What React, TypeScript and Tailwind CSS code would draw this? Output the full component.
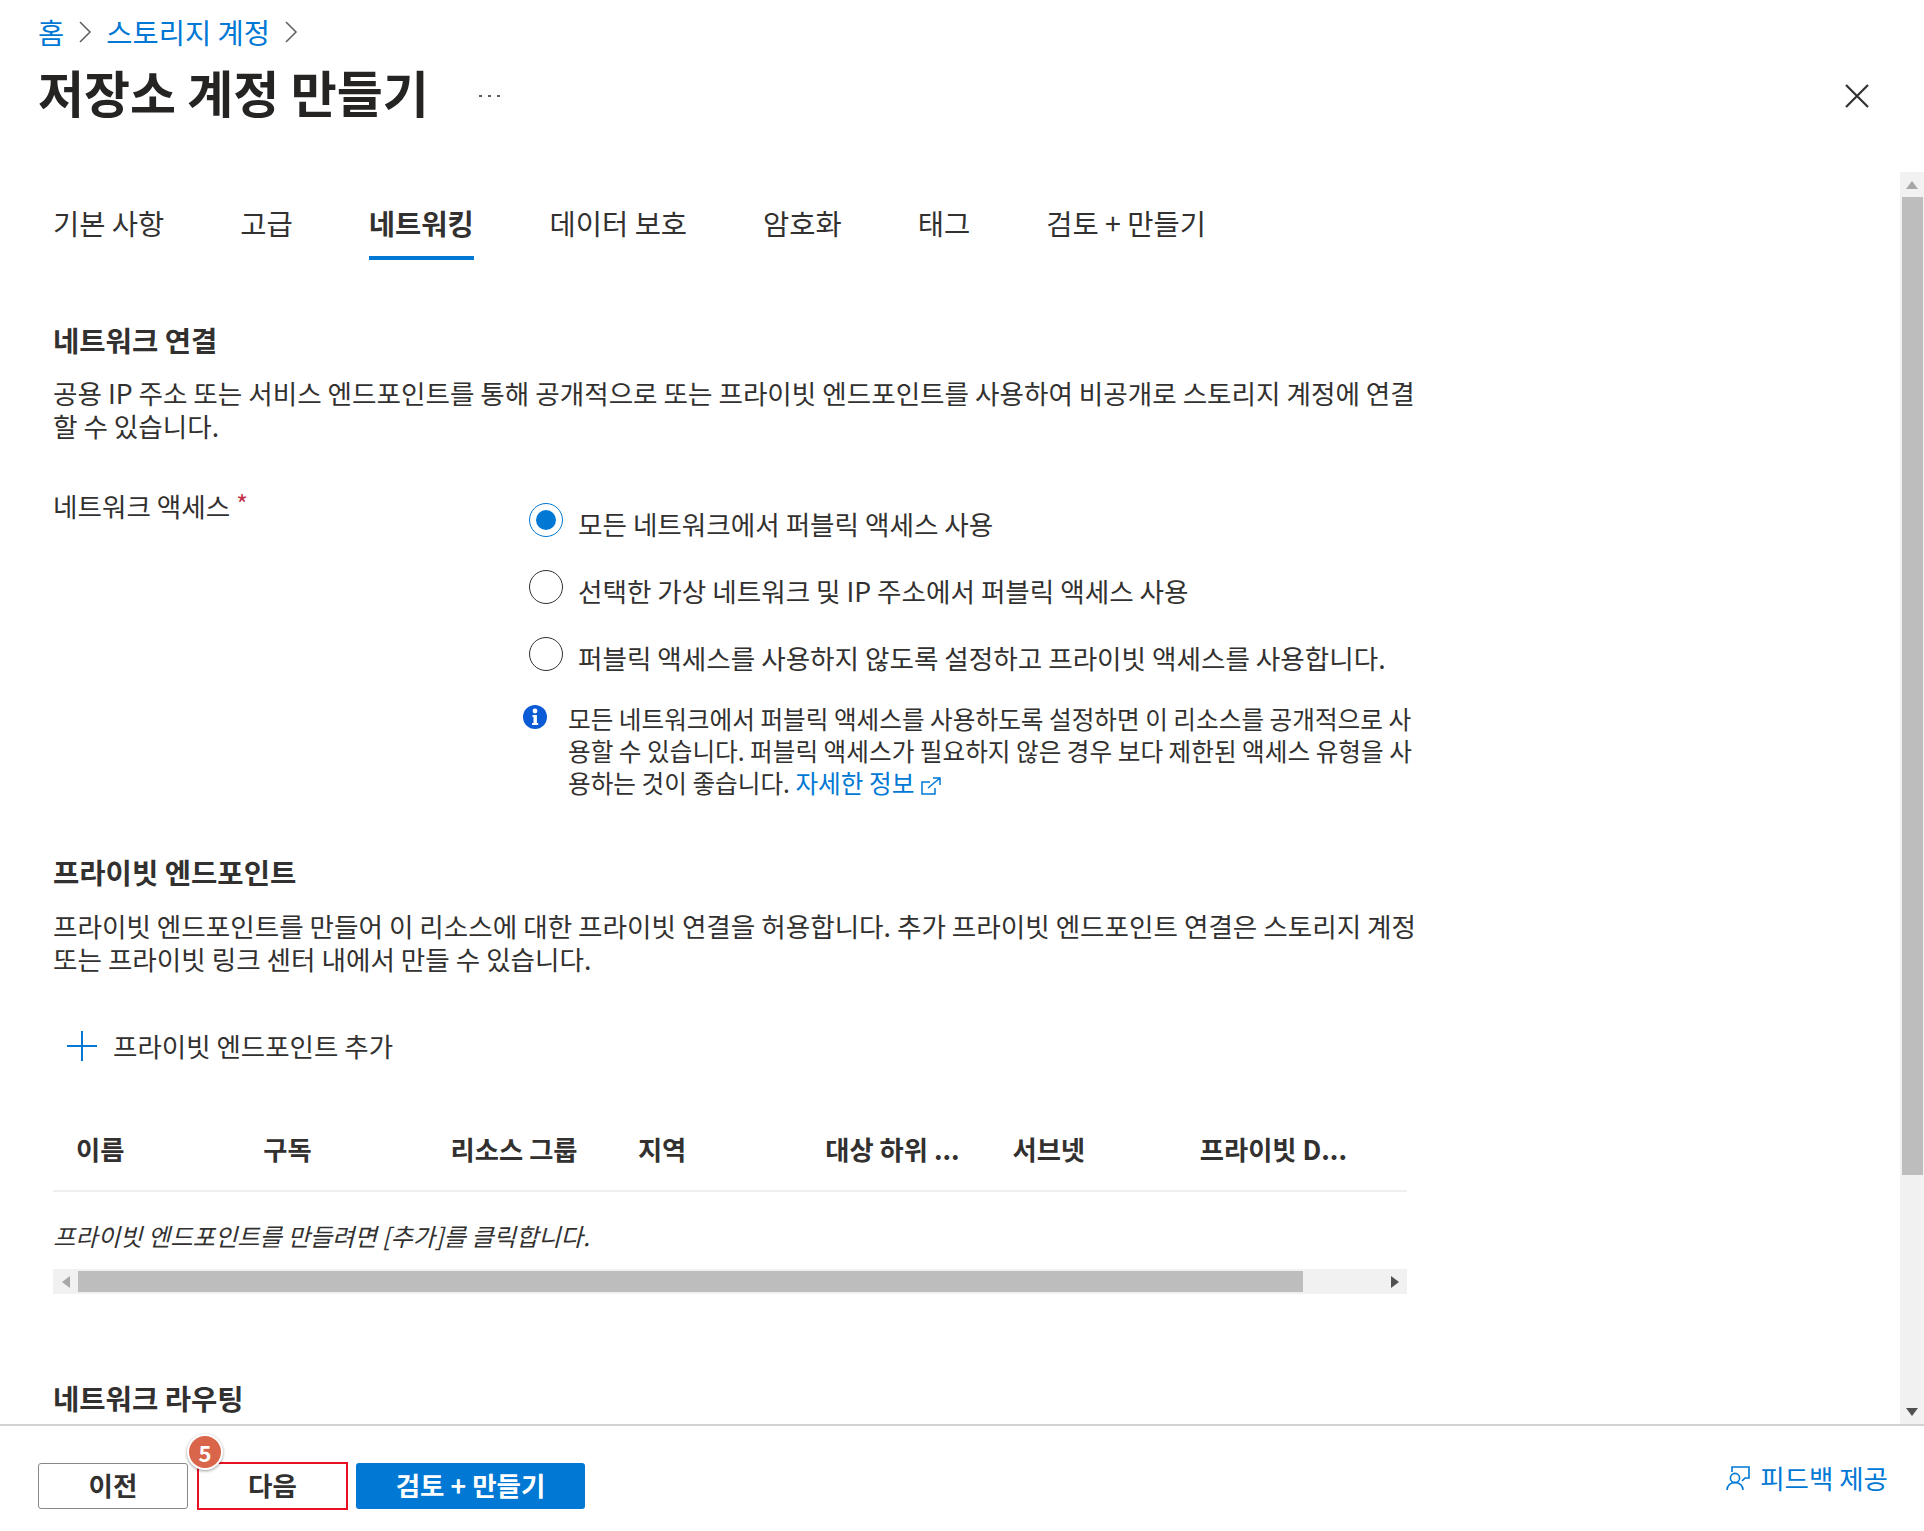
import React from "react";

const font = { fontFamily: '"Noto Sans CJK KR", "Liberation Sans", sans-serif' };

function Radio({ checked }: { checked?: boolean }) {
  return (
    <span className={`flex h-[34px] w-[34px] shrink-0 items-center justify-center rounded-full border-[1.5px] ${checked ? "border-[#0078d4]" : "border-[#323130]"}`}>
      {checked && <span className="h-[20px] w-[20px] rounded-full bg-[#0078d4]" />}
    </span>
  );
}

function RadioRow({ label, checked }: { label: string; checked?: boolean }) {
  return (
    <div className="flex h-[34px] items-start gap-[15px]">
      <Radio checked={checked} />
      <span className="mt-[4px] text-[26.6px] leading-[34px] whitespace-nowrap">{label}</span>
    </div>
  );
}

function Chevron() {
  return (
    <svg width="14" height="22" viewBox="0 0 14 22" className="shrink-0" fill="none" stroke="#605e5c" strokeWidth="1.5">
      <path d="M2 1l10 10L2 21" />
    </svg>
  );
}

function Triangle({ dir, color }: { dir: "up" | "down" | "left" | "right"; color: string }) {
  const d = { up: "M0 8L6 0l6 8z", down: "M0 0l6 8 6-8z", left: "M8 0v12L0 6z", right: "M0 0v12l8-6z" }[dir];
  const vertical = dir === "up" || dir === "down";
  return (
    <svg width={vertical ? 12 : 8} height={vertical ? 8 : 12} viewBox={vertical ? "0 0 12 8" : "0 0 8 12"}>
      <path d={d} fill={color} />
    </svg>
  );
}

const tabs = ["기본 사항", "고급", "네트워킹", "데이터 보호", "암호화", "태그", "검토 + 만들기"];
const cols = ["이름", "구독", "리소스 그룹", "지역", "대상 하위 ...", "서브넷", "프라이빗 D..."];

export default function App() {
  return (
    <div style={font} className="flex h-[1531px] w-[1924px] flex-col overflow-hidden bg-white text-[#323130]">
      <header className="relative h-[172px] shrink-0 pl-[38px] pr-[55px]">
        <nav className="flex items-center gap-[14px] pt-[13px] text-[28.5px] leading-[38px] text-[#0078d4]">
          <span>홈</span>
          <Chevron />
          <span>스토리지 계정</span>
          <Chevron />
        </nav>
        <div className="mt-[9px] flex items-center justify-between">
          <div className="flex items-center">
            <h1 className="text-[50px] font-bold leading-[62px] text-[#252423]">저장소 계정 만들기</h1>
            <span className="ml-[50px] mt-[10px] flex gap-[6px]">
              <span className="h-[2px] w-[3px] bg-[#605e5c]" />
              <span className="h-[2px] w-[3px] bg-[#605e5c]" />
              <span className="h-[2px] w-[3px] bg-[#605e5c]" />
            </span>
          </div>
          <svg width="24" height="24" viewBox="0 0 24 24" stroke="#323130" strokeWidth="2.2" fill="none" className="mt-[10px]">
            <path d="M1 1l22 22M23 1L1 23" />
          </svg>
        </div>
      </header>

      <main className="flex min-h-0 flex-1">
        <div className="min-w-0 flex-1 overflow-hidden pl-[53px]">
          <div className="flex gap-[76px] pt-[28px]">
            {tabs.map((t) => (
              <div key={t} className={`flex h-[60px] flex-col justify-between whitespace-nowrap text-[28.5px] leading-[46px] ${t === "네트워킹" ? "border-b-[4px] border-[#0078d4] font-bold" : ""}`}>
                {t}
              </div>
            ))}
          </div>

          <h2 className="mt-[63px] text-[28.6px] font-bold leading-[34px]">네트워크 연결</h2>
          <p className="mt-[19px] w-[1372px] text-[26.6px] leading-[33px]">
            공용 IP 주소 또는 서비스 엔드포인트를 통해 공개적으로 또는 프라이빗 엔드포인트를 사용하여 비공개로 스토리지 계정에 연결할 수 있습니다.
          </p>

          <div className="mt-[47px] flex">
            <div className="w-[476px] shrink-0 text-[26.6px] leading-[34px]">
              네트워크 액세스 <span className="align-[3px] text-[25px] leading-none text-[#c4314b]">*</span>
            </div>
            <div className="mt-[14px] flex flex-col gap-[33px]">
              <RadioRow checked label="모든 네트워크에서 퍼블릭 액세스 사용" />
              <RadioRow label="선택한 가상 네트워크 및 IP 주소에서 퍼블릭 액세스 사용" />
              <RadioRow label="퍼블릭 액세스를 사용하지 않도록 설정하고 프라이빗 액세스를 사용합니다." />
              <div className="-ml-[6px] mt-[1px] flex gap-[21px]">
                <svg width="24" height="24" viewBox="0 0 24 24" className="shrink-0">
                  <circle cx="12" cy="12" r="12" fill="#0b5ad6" />
                  <circle cx="12" cy="6" r="2.4" fill="#fff" />
                  <path d="M9.5 10h4.4v8h1.3v2H9v-2h1.5v-6H9.5z" fill="#fff" />
                </svg>
                <p className="-mt-[3px] w-[846px] text-[24.65px] leading-[32px]">
                  모든 네트워크에서 퍼블릭 액세스를 사용하도록 설정하면 이 리소스를 공개적으로 사용할 수 있습니다. 퍼블릭 액세스가 필요하지 않은 경우 보다 제한된 액세스 유형을 사용하는 것이 좋습니다.{" "}
                  <span className="text-[#0078d4]">자세한 정보</span>
                  <svg width="20" height="18" viewBox="0 0 20 18" className="ml-[7px] inline-block align-[-2px]" fill="none" stroke="#0078d4" strokeWidth="1.5">
                    <path d="M9 5H1v12h13v-6M7 11L19 1M12 1h7v7" />
                  </svg>
                </p>
              </div>
            </div>
          </div>

          <h2 className="mt-[57px] text-[28.6px] font-bold leading-[34px]">프라이빗 엔드포인트</h2>
          <p className="mt-[20px] w-[1372px] text-[26.6px] leading-[33px]">
            프라이빗 엔드포인트를 만들어 이 리소스에 대한 프라이빗 연결을 허용합니다. 추가 프라이빗 엔드포인트 연결은 스토리지 계정 또는 프라이빗 링크 센터 내에서 만들 수 있습니다.
          </p>

          <div className="mt-[54px] flex items-center gap-[16px] pl-[14px]">
            <svg width="30" height="30" viewBox="0 0 30 30" stroke="#0078d4" strokeWidth="2" fill="none">
              <path d="M15 0v30M0 15h30" />
            </svg>
            <span className="text-[26.5px] leading-[34px]">프라이빗 엔드포인트 추가</span>
          </div>

          <div className="w-[1354px]">
            <div className="mt-[69px] flex h-[60px] items-start border-b-2 border-[#efefef] pl-[23px]">
              {cols.map((c) => (
                <div key={c} className="w-[187.3px] shrink-0 whitespace-nowrap text-[26.3px] font-bold leading-[34px]">
                  {c}
                </div>
              ))}
            </div>
            <p className="mt-[27px] text-[24.3px] italic leading-[34px]">프라이빗 엔드포인트를 만들려면 [추가]를 클릭합니다.</p>
            <div className="mt-[16px] flex h-[25px] items-center bg-[#f1f1f1]">
              <span className="flex w-[25px] shrink-0 justify-center"><Triangle dir="left" color="#a6a6a6" /></span>
              <span className="h-[21px] w-[1225px] shrink-0 bg-[#bdbdbd]" />
              <span className="flex flex-1 justify-center pl-[80px]"><Triangle dir="right" color="#505050" /></span>
            </div>
          </div>

          <h2 className="mt-[87px] text-[28.6px] font-bold leading-[34px]">네트워크 라우팅</h2>
        </div>

        <div className="flex w-[24px] shrink-0 flex-col bg-[#f1f1f1]">
          <div className="flex h-[25px] shrink-0 items-center justify-center"><Triangle dir="up" color="#a6a6a6" /></div>
          <div className="ml-[2px] mr-[1px] h-[978px] bg-[#bdbdbd]" />
          <div className="flex-1" />
          <div className="flex h-[25px] shrink-0 items-center justify-center"><Triangle dir="down" color="#505050" /></div>
        </div>
      </main>

      <footer className="flex h-[107px] shrink-0 items-start justify-between border-t-2 border-[#d2d2d2] pl-[38px] pr-[36px] pt-[37px]">
        <div className="flex items-start">
          <button className="h-[46px] w-[150px] rounded-[3px] border border-[#8a8886] pb-[2px] text-[26.5px] font-bold leading-[34px]">이전</button>
          <div className="relative ml-[9px] -mt-px">
            <button className="h-[48px] w-[151px] border-2 border-[#e81123] pb-[2px] text-[26.5px] font-bold leading-[34px]">다음</button>
            <span className="absolute -top-[28px] -left-[10px] flex h-[36px] w-[36px] items-center justify-center rounded-full border-2 border-white bg-[#d9654a] text-[22px] font-bold leading-none text-white shadow-[0_1px_3px_rgba(0,0,0,0.4)]">5</span>
          </div>
          <button className="ml-[8px] h-[46px] w-[229px] rounded-[3px] bg-[#0078d4] pb-[2px] text-[26.5px] font-bold leading-[34px] text-white">검토 + 만들기</button>
        </div>
        <div className="-mt-[2px] flex items-center gap-[10px] text-[#0078d4]">
          <svg width="24" height="24" viewBox="0 0 24 24" fill="none" stroke="#0078d4" strokeWidth="1.6">
            <circle cx="9" cy="12" r="4.6" />
            <path d="M1 24c0-4.5 3.5-7.5 8-7.5s8 3 8 7.5M6 6V1h17v11h-4l-3 3" />
          </svg>
          <span className="text-[26.5px] leading-[34px]">피드백 제공</span>
        </div>
      </footer>
    </div>
  );
}
